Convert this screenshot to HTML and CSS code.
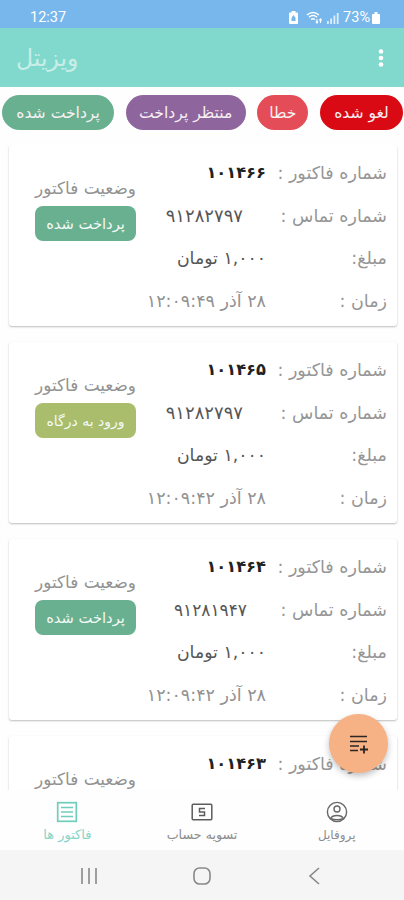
FILE: index.html
```
<!DOCTYPE html>
<html lang="fa" dir="rtl">
<head>
<meta charset="utf-8">
<title>ویزیتل</title>
<link rel="stylesheet" href="styles.css">
</head>
<body>
<div class="status-bar" dir="ltr">
  <span class="clock">12:37</span>
  <div class="indicators">
    <svg class="ind-alarm" width="9" height="13" viewBox="0 0 9 13"><path d="M2.500 0h4v1.500H8q1 0 1 1V12q0 1-1 1H1q-1 0-1-1V2.500q0-1 1-1h1.500z" fill="#fff"/><path d="M4.500 4 2.500 7v3h4V7z" fill="#78b6ea"/></svg>
    <svg class="ind-wifi" width="17" height="13" viewBox="0 0 17 13" fill="none" stroke="#fff" stroke-width="1.500"><path d="M1 4Q7 -1 13 4M3 6.200Q7 3 11 6.200M5 8.500Q7 7 9 8.500"/><path d="M11 8v4M14.500 12V8M9.800 10.500 11 12l1.200-1.500M13.300 9.300l1.200-1.500 1.200 1.500" stroke-width="1.100"/></svg>
    <svg class="ind-signal" width="12" height="12" viewBox="0 0 12 12" fill="#fff"><path d="M0 9h1.800v3H0zM3.200 6.500H5V12H3.200zM6.500 3.500h1.800V12H6.500zM9.800 1h1.800v11H9.800z" opacity=".75"/></svg>
    <span class="percent">73%</span>
    <svg width="8" height="12" viewBox="0 0 8 12"><path d="M2.500 0h3v2H7q1 0 1 1v8q0 1-1 1H1q-1 0-1-1V3q0-1 1-1h1.500z" fill="#fff"/></svg>
  </div>
</div>
<header class="app-bar">
  <svg class="more" width="6" height="18" viewBox="0 0 6 18" fill="#fff"><circle cx="3" cy="2.500" r="2.300"/><circle cx="3" cy="9" r="2.300"/><circle cx="3" cy="15.500" r="2.300"/></svg>
  <h1 class="title">ویزیتل</h1>
</header>
<div class="chips">
  <span class="chip cancelled">لغو شده</span>
  <span class="chip error">خطا</span>
  <span class="chip pending">منتظر پرداخت</span>
  <span class="chip paid">پرداخت شده</span>
</div>
<main class="list">
  <article class="card">
    <dl class="details">
      <dt>شماره فاکتور :</dt><dd class="number">۱۰۱۴۶۶</dd>
      <dt>شماره تماس :</dt><dd class="phone">۹۱۲۸۲۷۹۷</dd>
      <dt>مبلغ:</dt><dd class="amount">۱,۰۰۰ تومان</dd>
      <dt>زمان :</dt><dd class="time">۲۸ آذر ۱۲:۰۹:۴۹</dd>
    </dl>
    <div class="state"><span class="state-label">وضعیت فاکتور</span><span class="badge paid">پرداخت شده</span></div>
  </article>
  <article class="card">
    <dl class="details">
      <dt>شماره فاکتور :</dt><dd class="number">۱۰۱۴۶۵</dd>
      <dt>شماره تماس :</dt><dd class="phone">۹۱۲۸۲۷۹۷</dd>
      <dt>مبلغ:</dt><dd class="amount">۱,۰۰۰ تومان</dd>
      <dt>زمان :</dt><dd class="time">۲۸ آذر ۱۲:۰۹:۴۲</dd>
    </dl>
    <div class="state"><span class="state-label">وضعیت فاکتور</span><span class="badge gateway">ورود به درگاه</span></div>
  </article>
  <article class="card">
    <dl class="details">
      <dt>شماره فاکتور :</dt><dd class="number">۱۰۱۴۶۴</dd>
      <dt>شماره تماس :</dt><dd class="phone short">۹۱۲۸۱۹۴۷</dd>
      <dt>مبلغ:</dt><dd class="amount">۱,۰۰۰ تومان</dd>
      <dt>زمان :</dt><dd class="time">۲۸ آذر ۱۲:۰۹:۴۲</dd>
    </dl>
    <div class="state"><span class="state-label">وضعیت فاکتور</span><span class="badge paid">پرداخت شده</span></div>
  </article>
  <article class="card">
    <dl class="details">
      <dt>شماره فاکتور :</dt><dd class="number">۱۰۱۴۶۳</dd>
    </dl>
    <div class="state"><span class="state-label">وضعیت فاکتور</span></div>
  </article>
</main>
<button class="fab" aria-label="افزودن">
  <svg width="20" height="20" viewBox="0 0 20 20" stroke="#2b2523" fill="none"><path d="M1 2.500h17M1 7.500h17M1 12h9M1 16.500h8" stroke-width="1.700"/><path d="M15 11.500v8M11 15.500h8" stroke-width="1.800"/></svg>
</button>
<nav class="tabs">
  <a class="tab"><svg width="22" height="22" viewBox="0 0 22 22" fill="none" stroke="#686868" stroke-width="1.400"><circle cx="11" cy="11" r="9.600"/><circle cx="11" cy="8" r="3"/><path d="M4.500 17.500Q6 14.500 11 14.500t6.500 3Q11 20 4.500 17.500"/></svg><span>پروفایل</span></a>
  <a class="tab settle"><svg width="22" height="22" viewBox="0 0 22 22" fill="none" stroke="#5c5c5c" stroke-width="1.500"><rect x="1.200" y="3.200" width="19.600" height="15.600" rx="1"/><path d="M14 7.500H8.500V11h5v3.500H8"/></svg><span>تسویه حساب</span></a>
  <a class="tab active"><svg width="22" height="22" viewBox="0 0 22 22" fill="none" stroke="#70cdbc" stroke-width="1.700"><rect x="1.700" y="1.700" width="18.600" height="18.600"/><path d="M5 6.500h12M5 11h12M5 15.500h12" stroke-width="1.400"/></svg><span>فاکتور ها</span></a>
</nav>
<footer class="system-nav">
  <svg width="24" height="24" viewBox="0 0 24 24"><path d="M16 4 7 12l9 8"/></svg>
  <svg width="24" height="24" viewBox="0 0 24 24"><rect x="4" y="4" width="16" height="16" rx="5.500"/></svg>
  <svg width="24" height="24" viewBox="0 0 24 24"><path d="M5 4v16M12 4v16M19 4v16"/></svg>
</footer>
</body>
</html>
```
FILE: styles.css
```
* { box-sizing: border-box; }
body { margin: 0; width: 404px; height: 900px; overflow: hidden; display: flex; flex-direction: column; position: relative; background: #fefefe; font-family: "DejaVu Sans", sans-serif; white-space: nowrap; }
.status-bar { height: 28px; flex: none; background: #77b7eb; color: #fff; display: flex; justify-content: space-between; align-items: center; padding: 7px 24px 0 30px; font: 14.500px Roboto, sans-serif; }
.indicators { display: flex; align-items: center; gap: 4px; }
.ind-wifi { margin-left: 4px; }
.percent { margin-right: -2px; }
.app-bar { height: 59px; flex: none; background: #81d9cd; display: flex; align-items: center; justify-content: space-between; padding: 0 20px 0 16px; }
.title { margin: 0; color: #c8eee8; font-size: 23.500px; font-weight: 400; }
.chips { height: 58px; flex: none; display: flex; align-items: flex-start; justify-content: space-between; padding: 8px 1px 0 2px; }
.chip { height: 35px; border-radius: 18px; color: #f8f0f2; display: flex; align-items: center; justify-content: center; font-size: 15.600px; }
.cancelled { width: 83px; background: #d90a14; }
.error { width: 51px; background: #e44c57; }
.pending { width: 120px; background: #8f659d; }
.chip.paid { width: 112px; }
.paid { background: #69b090; }
.gateway { background: #a9bd6c; }
.list { height: 645px; flex: none; overflow: hidden; display: flex; flex-direction: column; gap: 16px; padding: 0 7px 0 9px; }
.card { height: 181px; flex: none; background: #fff; border-radius: 3px; box-shadow: 0 1px 2px rgba(0,0,0,.26); display: flex; justify-content: space-between; padding: 7px 10px 0 26px; }
.details { margin: 0; display: grid; grid-template-columns: 121px 120px; grid-auto-rows: 42.700px; line-height: 42px; }
.details dt { color: #969696; font-size: 17.500px; }
.details dd { margin: 0; color: #565656; font-size: 17.300px; }
.details .number { color: #222; font-size: 16.300px; font-weight: 700; }
.details .phone { padding-right: 23px; font-size: 18px; }
.details .phone.short { padding-right: 19px; font-size: 17px; }
.details .time { color: #929292; font-size: 17.500px; }
.state { width: 101px; display: flex; flex-direction: column; align-items: center; padding-top: 23px; }
.state-label { height: 31px; line-height: 26px; color: #929292; font-size: 16.900px; }
.badge { width: 101px; height: 35px; border-radius: 8px; color: #f3faf6; display: flex; align-items: center; justify-content: center; font-size: 14.700px; }
.badge.gateway { font-size: 14px; }
.fab { position: absolute; left: 329px; top: 714px; width: 59px; height: 59px; border: 0; border-radius: 50%; background: #f6b284; box-shadow: 0 3px 6px rgba(0,0,0,.25); display: grid; place-items: center; padding: 0; }
.tabs { height: 60px; flex: none; background: #fefefe; display: grid; grid-template-columns: repeat(3, 1fr); }
.tab { display: flex; flex-direction: column; align-items: center; padding-top: 11px; gap: 3px; color: #8c8c8c; font-size: 12px; line-height: 18px; }
.tab.settle { font-size: 12.700px; }
.tab.active { color: #86d5c9; font-size: 13px; }
.system-nav { height: 50px; flex: none; background: #f5f5f5; display: flex; justify-content: space-between; align-items: center; padding: 2px 77px 0; }
.system-nav svg { fill: none; stroke: #898989; stroke-width: 1.600; }
```
